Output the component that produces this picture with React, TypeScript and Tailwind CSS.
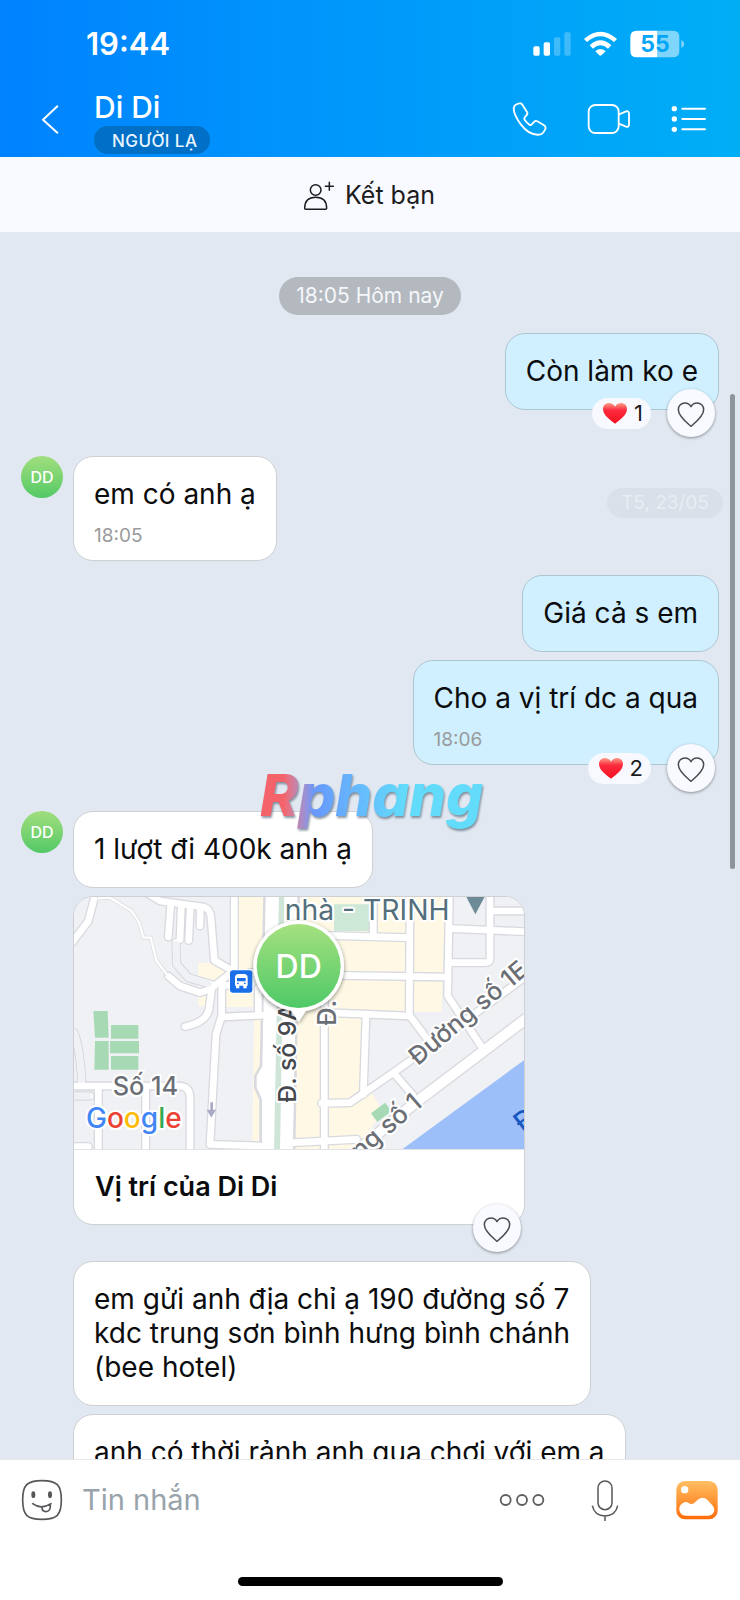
import type { ReactNode } from "react";

function StatusIcons() {
  return (
    <svg width="152" height="28" viewBox="0 0 456 84" className="shrink-0" aria-hidden="true">
      <g fill="#fff">
        <rect x="1" y="49" width="19" height="28" rx="5" />
        <rect x="32" y="37" width="19" height="40" rx="5" />
        <rect x="63" y="22" width="19" height="55" rx="5" opacity=".25" />
        <rect x="94" y="7" width="19" height="70" rx="5" opacity=".25" />
        <path d="M153 27Q202-17 252 27L243 36Q202 2 162 36Z" />
        <path d="M170 46Q202 16 235 46L225 56Q202 36 180 56Z" />
        <path d="M187 64Q202 50 218 64L205 76Q202 78 199 76Z" />
      </g>
      <path d="M311 2H373V82H311Q292 82 292 63V21Q292 2 311 2Z" fill="#fff" />
      <path d="M373 2H420Q439 2 439 21V63Q439 82 420 82H373Z" fill="#fff" opacity=".5" />
      <path d="M445 30Q454 34 454 42T445 54Z" fill="#fff" opacity=".5" />
      <text x="366" y="67" textAnchor="middle" fontFamily="Inter, sans-serif" fontWeight="700" fontSize="69" fill="#05a6f7">
        55
      </text>
    </svg>
  );
}

function HeartOutline() {
  return (
    <svg width="28" height="26" viewBox="0 0 84 78" fill="none" stroke="#4b4b4d" strokeWidth="4.5" strokeLinejoin="round" aria-hidden="true">
      <path d="M42 73C28 61 4 42 4 23C4 11 13 3 24 3C32 3 38 7 42 14C46 7 52 3 60 3C71 3 80 11 80 23C80 42 56 61 42 73Z" />
    </svg>
  );
}

function HeartFilled() {
  return (
    <svg width="24" height="21" viewBox="0 0 72 63" aria-hidden="true">
      <defs>
        <linearGradient id="heart" x1="0" y1="0" x2="0" y2="1">
          <stop offset="0" stopColor="#fba08b" />
          <stop offset=".35" stopColor="#fb2b3d" />
          <stop offset="1" stopColor="#f4101f" />
        </linearGradient>
      </defs>
      <path d="M36 62C22 51 0 37 0 18C0 7 8 0 18 0C26 0 32 4 36 11C40 4 46 0 54 0C64 0 72 7 72 18C72 37 50 51 36 62Z" fill="url(#heart)" />
    </svg>
  );
}

function LikeButton() {
  return (
    <button aria-label="Thả tim" className="flex size-12 items-center justify-center rounded-full bg-[#f9faff] pt-1 shadow-[0_1px_3px_rgba(0,0,0,0.4)]">
      <HeartOutline />
    </button>
  );
}

function Reactions({ count }: { count?: number }) {
  return (
    <div className="absolute right-[3px] bottom-[-28px] flex items-center gap-4">
      {count !== undefined && (
        <button className="flex h-[31px] items-center gap-[7px] rounded-full bg-[#f7f9ff] pr-2 pl-[11px] text-[22px] leading-none text-[#1c1c1e]">
          <HeartFilled />
          {count}
        </button>
      )}
      <LikeButton />
    </div>
  );
}

function Bubble({ children, time, mine, count }: { children: ReactNode; time?: string; mine?: boolean; count?: number }) {
  return (
    <div
      className={
        "relative w-fit max-w-[570px] rounded-[20px] border px-5 pt-5 " +
        (mine ? "border-[#adc7d2] bg-[#d0f0ff] " : "border-[#cfd0d3] bg-white ") +
        (time ? "pb-[14px]" : "pb-[21px]")
      }
    >
      <p className="text-[28px] leading-[34px] text-[#0b0c0d]">{children}</p>
      {time && <time className="mt-[15px] block text-[19px] leading-5 text-[#999a9c]">{time}</time>}
      {count !== undefined && <Reactions count={count} />}
    </div>
  );
}

function Avatar() {
  return (
    <div className="flex size-[42px] shrink-0 items-center justify-center rounded-full bg-linear-to-b from-[#a0de7e] to-[#50c966] text-[16px] font-medium text-white">
      DD
    </div>
  );
}

function Roads() {
  return (
    <g fill="none" strokeLinejoin="round" strokeLinecap="round">
      <path d="M42 455Q60 500 65 600M42 645H90M42 797H85" strokeWidth="20" />
      <path d="M348 185L350 250L385 290L460 312" strokeWidth="18" />
      <path d="M102 55L85 120L36 185" strokeWidth="18" />
      <path d="M325 285L360 315L420 335L450 325L510 278" strokeWidth="19" />
      <path d="M260 36L300 60L430 78Q450 82 453 110L463 238L512 266" strokeWidth="19" />
      <path d="M332 72L325 168M364 75L360 175M391 75L386 178M421 78L420 135" strokeWidth="16" />
      <path d="M455 325L447 385Q438 425 375 437" strokeWidth="18" />
      <path d="M523 36V280" strokeWidth="20" />
      <path d="M560 313H495Q485 315 485 330V405L468 460L450 790L640 796" strokeWidth="20" />
      <path d="M487 408L620 402M595 320V400M570 275H630" strokeWidth="17" />
      <path d="M36 615H355Q390 615 390 650V815M115 620V815M257 620V815" strokeWidth="24" />
      <path d="M940 36V160M1050 36L1048 400M1168 36L1163 345L1270 505" strokeWidth="21" />
      <path d="M790 163L1040 170M1175 143L1400 152M1300 90H1400" strokeWidth="18" />
      <path d="M1290 36V232Q1290 245 1275 245H1175" strokeWidth="18" />
      <path d="M830 283L1155 288M800 395L1050 405L1110 485" strokeWidth="18" />
      <path d="M918 400L910 640M793 330V815" strokeWidth="20" />
      <path d="M785 667L870 665L1040 547L1400 285" strokeWidth="20" />
      <path d="M1000 575L1065 650" strokeWidth="18" />
      <path d="M860 835L1070 662L1400 412" strokeWidth="32" />
      <path d="M702 785L890 775" strokeWidth="20" />
    </g>
  );
}

function LocationMap() {
  return (
    <svg viewBox="42 48 1350 756" className="block w-full" role="img" aria-label="Bản đồ vị trí" fontFamily="Inter, sans-serif">
      <defs>
        <linearGradient id="pin" x1="0" y1="0" x2="0" y2="1">
          <stop offset="0" stopColor="#a5e07f" />
          <stop offset="1" stopColor="#4ec967" />
        </linearGradient>
        <filter id="pinShadow" x="-20%" y="-20%" width="140%" height="140%">
          <feDropShadow dx="0" dy="5" stdDeviation="6" floodOpacity=".45" />
        </filter>
      </defs>
      <rect x="36" y="36" width="1370" height="780" fill="#f0f1f4" />
      <g fill="#fef8e5">
        <path d="M535 36H612V265H535ZM415 245H480L500 270L440 375H415ZM495 320H578V378H495ZM582 410H605V560L586 600L605 640V790H577Z" />
        <path d="M702 36H1155L1145 392H1040L925 400V620L970 690L890 804H702Z" />
      </g>
      <path d="M822 70H928V150H822Z" fill="#cde8d6" />
      <g fill="#a8d9b5">
        <path d="M100 390H143L146 470H105ZM153 432H235V473H153ZM105 480H146V566H103ZM150 480H237V517H150ZM153 525H235V566H153Z" />
        <path d="M933 697L975 665L995 690L952 723Z" />
      </g>
      <path d="M1028 804L1394 536V804Z" fill="#9cbffa" />
      <g stroke="#d9dae0" strokeWidth="8" fill="#fff">
        <path d="M614 30H716L702 820H602V655L586 620V585L603 555Z" />
      </g>
      <g stroke="#d9dae0" className="[&_path]:[stroke-width:28px]">
        <Roads />
      </g>
      <g stroke="#fff" className="[&_path]:[stroke-width:20px]">
        <Roads />
      </g>
      <path d="M348 190L350 250L385 290L445 308M42 455Q60 500 65 595M42 645H85" fill="none" stroke="#f0f1f4" strokeWidth="20" strokeLinecap="round" />
      <path d="M618 36H712L698 815H607V650L591 620V585L608 555Z" fill="#fff" />
      <path d="M657 36H673L660 815H642Z" fill="#cfe5d8" />
      <path d="M860 835L1070 662L1400 412" fill="none" stroke="#d9dae0" strokeWidth="38" />
      <path d="M860 835L1070 662L1400 412" fill="none" stroke="#fff" strokeWidth="30" />
      <path d="M1255 483L1268 503M1052 636L1063 649" fill="none" stroke="#fff" strokeWidth="20" />
      <path d="M112 52L150 50L215 90L238 125L250 170H272L290 240L322 282" fill="none" stroke="#dedfe3" strokeWidth="12" />
      <path d="M112 52L150 50L215 90L238 125L250 170H272L290 240L325 286" fill="none" stroke="#fff" strokeWidth="7" />
      <path d="M451 664H459V686H468L454 710L440 686H451Z" fill="#a9abc6" />

      <g className="[paint-order:stroke]" stroke="#fff" strokeWidth="12" strokeLinejoin="round" fontWeight="500">
        <text x="674" y="117" fontSize="85" fontWeight="400" fill="#546f7c">nhà - TRINH</text>
        <text x="158" y="642" fontSize="76" fill="#6b6f75">Số 14</text>
        <text transform="translate(709 665) rotate(-90)" fontSize="74" fill="#45484d">Đ. số 9A</text>
        <text transform="translate(828 434) rotate(-90)" fontSize="76" fill="#6b6f75">Đ. s</text>
        <text transform="translate(1073 556) rotate(-40)" fontSize="75" fill="#6b6f75">Đường số 1E</text>
        <text transform="translate(900 838) rotate(-41)" fontSize="76" fill="#6b6f75">ng số 1</text>
        <text x="78" y="741" fontSize="84" fontWeight="500">
          <tspan fill="#4285f4">G</tspan>
          <tspan fill="#ea4335">o</tspan>
          <tspan fill="#fbbc05">o</tspan>
          <tspan fill="#4285f4">g</tspan>
          <tspan fill="#34a853">l</tspan>
          <tspan fill="#ea4335">e</tspan>
        </text>
      </g>
      <text transform="translate(1388 755) rotate(-38)" fontSize="80" fontWeight="500" fill="#1757c2">Đ</text>
      <path d="M1215 40H1278L1246 100Z" fill="#6d8a97" />

      <rect x="507" y="265" width="73" height="73" rx="12" fill="#fff" />
      <rect x="510" y="268" width="67" height="67" rx="9" fill="#1a6fe8" />
      <path d="M525 290Q525 279 536 279H552Q563 279 563 290V314H560V322H550V314H538V322H528V314H525Z" fill="#fff" />
      <path d="M531 291H557V301H531ZM531 305H536V309H531ZM552 305H557V309H552Z" fill="#1a6fe8" />

      <g filter="url(#pinShadow)" fill="#fff">
        <circle cx="716" cy="255" r="136" />
        <path d="M688 380L716 422L744 380Z" />
      </g>
      <circle cx="716" cy="255" r="126" fill="url(#pin)" />
      <text x="716" y="290" textAnchor="middle" fontSize="96" fontWeight="500" fill="#fff">DD</text>
    </svg>
  );
}

export default function App() {
  return (
    <div className="relative flex h-screen flex-col overflow-hidden bg-white font-[Inter,sans-serif]">
      <header className="shrink-0 bg-linear-to-r from-[#0082fe] to-[#00aef6] text-white">
        <div className="flex h-[88px] items-center justify-between pr-[55px] pl-[86px]">
          <span className="text-[31px] leading-9 font-semibold">19:44</span>
          <StatusIcons />
        </div>
        <div className="flex h-[69px] items-start pr-[33px] pl-[40px]">
          <button aria-label="Quay lại" className="mt-[16px] w-[54px]">
            <svg width="20" height="30" viewBox="0 0 60 90" fill="none" stroke="#fff" strokeWidth="6" strokeLinecap="round" strokeLinejoin="round">
              <path d="M52 7L9 47L52 86" />
            </svg>
          </button>
          <div className="flex-1">
            <h1 className="text-[30px] leading-[38px] font-medium">Di Di</h1>
            <span className="inline-flex h-7 items-center rounded-full bg-[#006fc6] pt-1 pr-[13px] pl-[18px] align-top text-[17px] font-medium tracking-wide text-[#eaf4ff]">
              NGƯỜI LẠ
            </span>
          </div>
          <nav className="mt-[13px] flex items-center gap-10">
            <button aria-label="Gọi thoại">
              <svg width="36" height="36" viewBox="0 0 108 108" fill="none" stroke="#fff" strokeWidth="5.5" strokeLinejoin="round">
                <path d="M8 22Q10 9 26 7Q30 6 34 11L48 33Q51 38 47 42L42 48Q38 53 42 58Q48 67 55 71Q59 74 62 70L70 62Q74 58 79 61L98 72Q106 77 103 84Q96 100 85 101Q55 104 30 71Q8 42 8 22Z" />
              </svg>
            </button>
            <button aria-label="Gọi video">
              <svg width="44" height="36" viewBox="0 0 132 108" fill="none" stroke="#fff" strokeWidth="5.5" strokeLinejoin="round">
                <rect x="5" y="12" width="90" height="84" rx="20" />
                <path d="M95 41L117 31Q126 29 126 39V70Q126 80 117 77L95 68" />
              </svg>
            </button>
            <button aria-label="Tùy chọn">
              <svg width="36" height="36" viewBox="0 0 108 108" fill="#fff">
                <circle cx="10" cy="23" r="8" />
                <circle cx="10" cy="54" r="8" />
                <circle cx="10" cy="85" r="8" />
                <path d="M34 23H102M34 54H102M34 85H102" stroke="#fff" strokeWidth="6" strokeLinecap="round" />
              </svg>
            </button>
          </nav>
        </div>
      </header>

      <button className="flex h-[76px] shrink-0 items-center justify-center gap-[10px] border-b border-[#e6e8ee] bg-[#f9faff] pt-[2px] pr-[2px] text-[25px] text-[#1c1c1e]">
        <svg width="32" height="30" viewBox="0 0 96 90" fill="none" stroke="#1c1c1e" strokeWidth="4.5" strokeLinecap="round" strokeLinejoin="round" aria-hidden="true">
          <circle cx="38" cy="27" r="16" />
          <path d="M5 82Q5 49 38 49T71 82Q71 85 68 85H8Q5 85 5 82ZM67 16H91M79 4V28" />
        </svg>
        Kết bạn
      </button>

      <main className="relative flex min-h-0 flex-1 flex-col">
        <div className="flex-1 overflow-y-auto bg-[#e1e8f1] px-[21px] pt-11 pb-6 [scrollbar-width:none]">
          <div className="mx-auto flex h-[38px] w-fit items-center rounded-full bg-[#b4b9c0] px-[17px] text-[21px] text-[#f5f7fa]">18:05 Hôm nay</div>

          <div className="mt-[18px] flex flex-col items-end">
            <Bubble mine count={1}>Còn làm ko e</Bubble>
          </div>

          <div className="mt-[46px] flex items-start gap-[10px]">
            <Avatar />
            <Bubble time="18:05">em có anh ạ</Bubble>
          </div>

          <div className="mt-[14px] flex flex-col items-end gap-2">
            <Bubble mine>Giá cả s em</Bubble>
            <Bubble mine time="18:06" count={2}>Cho a vị trí dc a qua</Bubble>
          </div>

          <div className="mt-[46px] flex items-start gap-[10px]">
            <Avatar />
            <div className="flex min-w-0 flex-col gap-2">
              <Bubble>1 lượt đi 400k anh ạ</Bubble>
              <article className="relative mb-7 w-[452px] max-w-full rounded-[20px] border border-[#cfd0d3] bg-white">
                <div className="overflow-hidden rounded-t-[19px] border-b border-[#e2e3e6]">
                  <LocationMap />
                </div>
                <h2 className="px-[21px] pt-5 pb-5 text-[27px] leading-[34px] font-semibold text-[#0b0c0d]">Vị trí của Di Di</h2>
                <Reactions />
              </article>
              <Bubble>
                em gửi anh địa chỉ ạ 190 đường số 7<br />
                kdc trung sơn bình hưng bình chánh
                <br />
                (bee hotel)
              </Bubble>
              <Bubble>anh có thời rảnh anh qua chơi với em ạ</Bubble>
            </div>
          </div>
        </div>
        <div className="absolute top-[255px] right-[17px] flex h-[30px] items-center rounded-full bg-[#dae0e9] px-[14px] text-[19px] text-[#e8edf4]">T5, 23/05</div>
        <div className="absolute top-[161px] right-[5px] h-[475px] w-[5px] rounded-full bg-[#8f949b]" />
        <div className="absolute top-[522px] left-[256px] bg-linear-to-r from-[#f5636a] from-12% via-[#6798fc] via-25% to-[#62dcfa] to-65% bg-clip-text px-1 text-[58px] leading-[80px] font-extrabold text-transparent italic drop-shadow-[1px_2px_1px_rgba(60,80,100,0.6)]">
          Rphang
        </div>
      </main>

      <footer className="shrink-0 border-t border-[#e6e8ea] bg-white">
        <div className="flex h-[80px] items-center pr-[22px] pl-[21px]">
          <button aria-label="Nhãn dán">
            <svg width="42" height="42" viewBox="0 0 126 126" fill="none" stroke="#55575a" strokeWidth="5" strokeLinecap="round">
              <path d="M63 5C108 5 121 18 121 63S108 121 63 121S5 108 5 63S18 5 63 5Z" />
              <ellipse cx="37" cy="47" rx="6" ry="10" fill="#55575a" stroke="none" />
              <ellipse cx="87" cy="47" rx="6" ry="10" fill="#55575a" stroke="none" />
              <path d="M35 74Q60 93 90 74M63 85Q63 98 75 98Q89 98 88 77" />
            </svg>
          </button>
          <input aria-label="Tin nhắn" placeholder="Tin nhắn" className="ml-[19px] min-w-0 flex-1 bg-transparent text-[29px] outline-none placeholder:text-[#98a3ab]" />
          <button aria-label="Thêm">
            <svg width="46" height="16" viewBox="0 0 138 48" fill="none" stroke="#5d5f62" strokeWidth="5.5">
              <circle cx="20" cy="24" r="15" />
              <circle cx="69" cy="24" r="15" />
              <circle cx="118" cy="24" r="15" />
            </svg>
          </button>
          <button aria-label="Ghi âm" className="ml-[46px]">
            <svg width="28" height="42" viewBox="0 0 84 126" fill="none" stroke="#55575a" strokeWidth="4.5">
              <rect x="21" y="6" width="42" height="86" rx="21" />
              <path d="M4 80Q10 110 42 111Q74 110 80 80M42 111V126" />
            </svg>
          </button>
          <button aria-label="Gửi ảnh" className="ml-[57px]">
            <svg width="42" height="40" viewBox="0 0 126 120">
              <defs>
                <linearGradient id="photo" x1="0" y1="0" x2="0" y2="1">
                  <stop offset="0" stopColor="#ffbf62" />
                  <stop offset="1" stopColor="#ff6c0a" />
                </linearGradient>
              </defs>
              <rect x="1" y="3" width="124" height="115" rx="26" fill="url(#photo)" />
              <circle cx="26" cy="29" r="11" fill="#fff" />
              <path d="M30 107Q11 106 10 89Q9 78 17 72Q27 62 38 69Q49 76 58 66L67 58Q81 48 94 59L109 76Q115 82 115 90Q114 106 96 107Z" fill="#fff" />
            </svg>
          </button>
        </div>
        <div className="flex h-[60px] justify-center pt-[37px]">
          <div className="h-[9px] w-[265px] rounded-full bg-black" />
        </div>
      </footer>
    </div>
  );
}
